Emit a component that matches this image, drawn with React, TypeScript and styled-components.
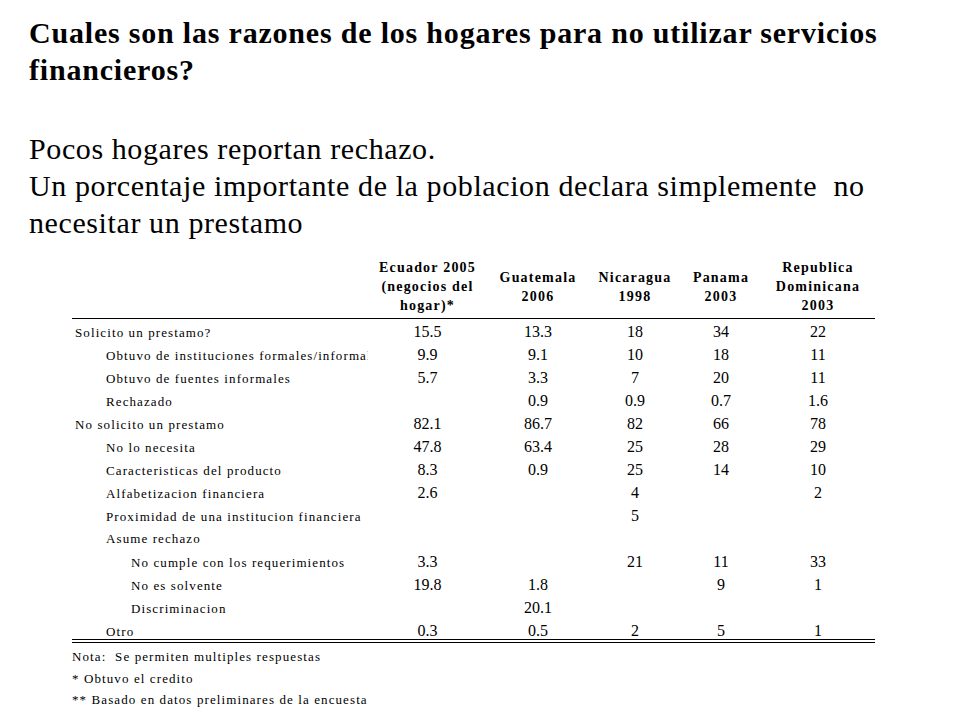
import styled, { createGlobalStyle } from "styled-components";

const GlobalStyle = createGlobalStyle`
    html, body {
        margin: 0;
        padding: 0;
        background: #ffffff;
    }
    body {
        font-family: "Liberation Serif", "Times New Roman", serif;
        color: #000000;
    }
`;

const Slide = styled.div`
    width: 960px;
    height: 720px;
    box-sizing: border-box;
    padding-top: 14px;
    overflow: hidden;
`;

const Title = styled.h1`
    margin: 0 0 0 29px;
    font-family: "Liberation Serif", "Times New Roman", serif;
    font-size: 30px;
    font-weight: 700;
    line-height: 37px;
    letter-spacing: 0.8px;
`;

const Lead = styled.p`
    margin: 42px 0 0 29px;
    font-family: "Liberation Serif", "Times New Roman", serif;
    font-size: 30px;
    font-weight: 400;
    line-height: 37px;
    letter-spacing: 0.6px;
    white-space: pre;
`;

const Table = styled.div`
    margin: 17px 0 0 72px;
    width: 803px;
`;

const columns = "296px 119px 102px 92px 80px 114px";

const HeaderRow = styled.div`
    display: grid;
    grid-template-columns: ${columns};
    align-items: center;
    padding-bottom: 3px;
    border-bottom: 1px solid #000;
`;

const HeaderCell = styled.div`
    display: flex;
    flex-direction: column;
    align-items: center;
    font-size: 14px;
    font-weight: 700;
    line-height: 19px;
    letter-spacing: 1.2px;
    white-space: nowrap;
`;

const Body = styled.div`
    border-bottom: 4px double #000;
`;

const Row = styled.div`
    display: grid;
    grid-template-columns: ${columns};
    align-items: baseline;
    height: 23px;
    box-sizing: border-box;
    padding-top: 2px;

    &:last-child {
        height: 21px;
    }
`;

const Label = styled.div<{ $level: number }>`
    padding-left: ${(p) => [3, 34, 59][p.$level]}px;
    font-size: 13px;
    line-height: 21px;
    letter-spacing: 1.1px;
    white-space: nowrap;
    overflow: hidden;
`;

const Value = styled.div`
    text-align: center;
    font-size: 16px;
    line-height: 21px;
`;

const Notes = styled.div`
    margin-left: 72px;
    padding-top: 3px;
    font-size: 13px;
    line-height: 21.5px;
    letter-spacing: 1.1px;
    white-space: pre;
`;

const headers = [
    ["Ecuador 2005", "(negocios del", "hogar)*"],
    ["Guatemala", "2006"],
    ["Nicaragua", "1998"],
    ["Panama", "2003"],
    ["Republica", "Dominicana", "2003"],
];

const rows: { label: string; level: number; values: string[] }[] = [
    { label: "Solicito un prestamo?", level: 0, values: ["15.5", "13.3", "18", "34", "22"] },
    { label: "Obtuvo de instituciones formales/informales", level: 1, values: ["9.9", "9.1", "10", "18", "11"] },
    { label: "Obtuvo de fuentes informales", level: 1, values: ["5.7", "3.3", "7", "20", "11"] },
    { label: "Rechazado", level: 1, values: ["", "0.9", "0.9", "0.7", "1.6"] },
    { label: "No solicito un prestamo", level: 0, values: ["82.1", "86.7", "82", "66", "78"] },
    { label: "No lo necesita", level: 1, values: ["47.8", "63.4", "25", "28", "29"] },
    { label: "Caracteristicas del producto", level: 1, values: ["8.3", "0.9", "25", "14", "10"] },
    { label: "Alfabetizacion financiera", level: 1, values: ["2.6", "", "4", "", "2"] },
    { label: "Proximidad de una institucion financiera", level: 1, values: ["", "", "5", "", ""] },
    { label: "Asume rechazo", level: 1, values: ["", "", "", "", ""] },
    { label: "No cumple con los requerimientos", level: 2, values: ["3.3", "", "21", "11", "33"] },
    { label: "No es solvente", level: 2, values: ["19.8", "1.8", "", "9", "1"] },
    { label: "Discriminacion", level: 2, values: ["", "20.1", "", "", ""] },
    { label: "Otro", level: 1, values: ["0.3", "0.5", "2", "5", "1"] },
];

const notes = [
    "Nota:  Se permiten multiples respuestas",
    "* Obtuvo el credito",
    "** Basado en datos preliminares de la encuesta",
];

export default function App() {
    return (
        <>
            <GlobalStyle />
            <Slide>
                <Title>
                    Cuales son las razones de los hogares para no utilizar servicios
                    <br />
                    financieros?
                </Title>
                <Lead>
                    {"Pocos hogares reportan rechazo.\nUn porcentaje importante de la poblacion declara simplemente  no\nnecesitar un prestamo"}
                </Lead>
                <Table>
                    <HeaderRow>
                        <div />
                        {headers.map((lines) => (
                            <HeaderCell key={lines.join(" ")}>
                                {lines.map((l) => (
                                    <span key={l}>{l}</span>
                                ))}
                            </HeaderCell>
                        ))}
                    </HeaderRow>
                    <Body>
                        {rows.map((r) => (
                            <Row key={r.label}>
                                <Label $level={r.level}>{r.label}</Label>
                                {r.values.map((v, i) => (
                                    <Value key={i}>{v}</Value>
                                ))}
                            </Row>
                        ))}
                    </Body>
                </Table>
                <Notes>{notes.join("\n")}</Notes>
            </Slide>
        </>
    );
}
